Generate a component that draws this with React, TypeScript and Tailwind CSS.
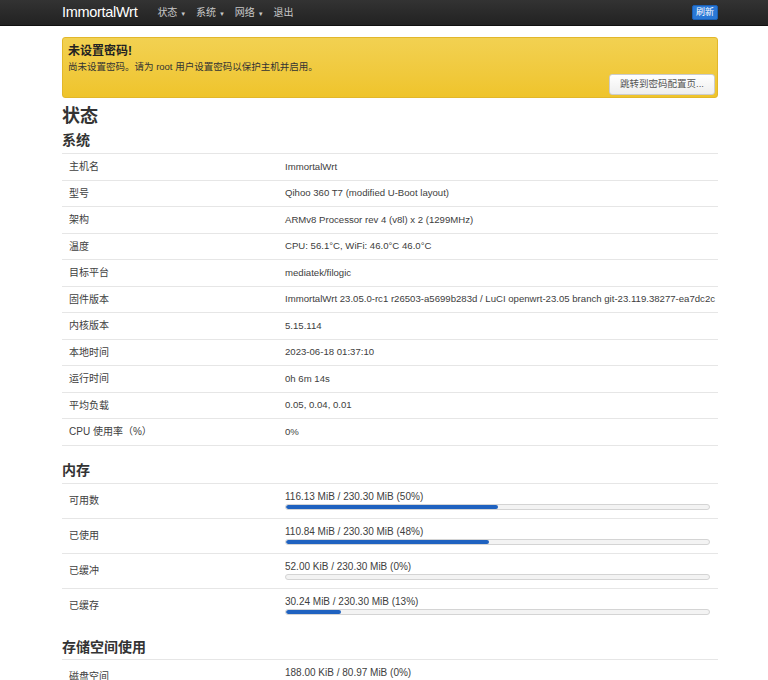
import React from "react";

const font = { fontFamily: '"Liberation Sans", "Noto Sans CJK SC", sans-serif' };

const system: [string, string][] = [
  ["主机名", "ImmortalWrt"],
  ["型号", "Qihoo 360 T7 (modified U-Boot layout)"],
  ["架构", "ARMv8 Processor rev 4 (v8l) x 2 (1299MHz)"],
  ["温度", "CPU: 56.1°C, WiFi: 46.0°C 46.0°C"],
  ["目标平台", "mediatek/filogic"],
  ["固件版本", "ImmortalWrt 23.05.0-rc1 r26503-a5699b283d / LuCI openwrt-23.05 branch git-23.119.38277-ea7dc2c"],
  ["内核版本", "5.15.114"],
  ["本地时间", "2023-06-18 01:37:10"],
  ["运行时间", "0h 6m 14s"],
  ["平均负载", "0.05, 0.04, 0.01"],
  ["CPU 使用率（%）", "0%"],
];

const memory: [string, string, number][] = [
  ["可用数", "116.13 MiB / 230.30 MiB (50%)", 50],
  ["已使用", "110.84 MiB / 230.30 MiB (48%)", 48],
  ["已缓冲", "52.00 KiB / 230.30 MiB (0%)", 0],
  ["已缓存", "30.24 MiB / 230.30 MiB (13%)", 13],
];

function Bar({ label, pct }: { label: string; pct: number }) {
  return (
    <div className="flex flex-col">
      <div className="leading-[12px]">{label}</div>
      <div className="mt-[1px] h-[6px] w-[425px] rounded-full border border-[#d4d4d4] bg-[#f3f3f3] overflow-hidden">
        <div className="h-full bg-[#1f62c0] rounded-full" style={{ width: `${pct}%` }} />
      </div>
    </div>
  );
}

export default function App() {
  return (
    <div className="min-h-[680px] bg-white text-[10px] text-[#404040]" style={font}>
      <div className="h-[26px] bg-gradient-to-b from-[#333333] to-[#222222] border-b border-[#111]">
        <div className="ml-[62px] w-[656px] h-full flex items-center">
          <span className="text-[14.5px] text-white tracking-[-0.3px]">ImmortalWrt</span>
          <div className="ml-[20px] flex items-center gap-[10px] text-[#c8c8c8] text-[10px]">
            <span>状态 <span className="text-[6px]">▼</span></span>
            <span>系统 <span className="text-[6px]">▼</span></span>
            <span>网络 <span className="text-[6px]">▼</span></span>
            <span>退出</span>
          </div>
          <span className="ml-auto bg-[#2a78d6] text-white text-[9px] leading-[13px] px-[3px] rounded-[2px] border border-[#1a5fb4]">刷新</span>
        </div>
      </div>

      <div className="ml-[62px] w-[656px]">
        <div className="mt-[11px] h-[61px] rounded-[3px] border border-[#e2b72a] bg-gradient-to-b from-[#f2d151] to-[#efc42a] px-[5px] pt-[6px] relative">
          <div className="text-[12px] font-bold text-[#222] leading-[14px]">未设置密码!</div>
          <div className="mt-[3px] text-[9.5px] text-[#333] leading-[12px]">尚未设置密码。请为 root 用户设置密码以保护主机并启用。</div>
          <div className="absolute right-[2px] bottom-[2px] w-[106px] h-[21px] bg-gradient-to-b from-white to-[#eeeeee] border border-[#cccccc] rounded-[3px] flex items-center justify-center text-[9.5px] text-[#555]">
            跳转到密码配置页...
          </div>
        </div>

        <h2 className="mt-[7px] text-[18px] font-bold text-[#333] leading-[22px]">状态</h2>
        <h3 className="mt-[4px] text-[14px] font-bold text-[#333] leading-[18px]">系统</h3>
        <div className="mt-[4px] border-b border-[#e6e6e6]">
          {system.map(([k, v]) => (
            <div key={k} className="h-[26.5px] border-t border-[#e6e6e6] flex items-center">
              <div className="w-[223px] pl-[7px] shrink-0">{k}</div>
              <div className="whitespace-nowrap text-[9.6px]">{v}</div>
            </div>
          ))}
        </div>

        <h3 className="mt-[15px] text-[14px] font-bold text-[#333] leading-[18px]">内存</h3>
        <div className="mt-[4px]">
          {memory.map(([k, v, p]) => (
            <div key={k} className="h-[35px] border-t border-[#e6e6e6] flex items-center">
              <div className="w-[223px] pl-[7px] shrink-0">{k}</div>
              <Bar label={v} pct={p} />
            </div>
          ))}
        </div>

        <h3 className="mt-[15px] text-[14px] font-bold text-[#333] leading-[18px]">存储空间使用</h3>
        <div className="mt-[3px]">
          <div className="h-[35px] border-t border-[#e6e6e6] flex items-center">
            <div className="w-[223px] pl-[7px] shrink-0">磁盘空间</div>
            <Bar label="188.00 KiB / 80.97 MiB (0%)" pct={0} />
          </div>
        </div>
      </div>
    </div>
  );
}
